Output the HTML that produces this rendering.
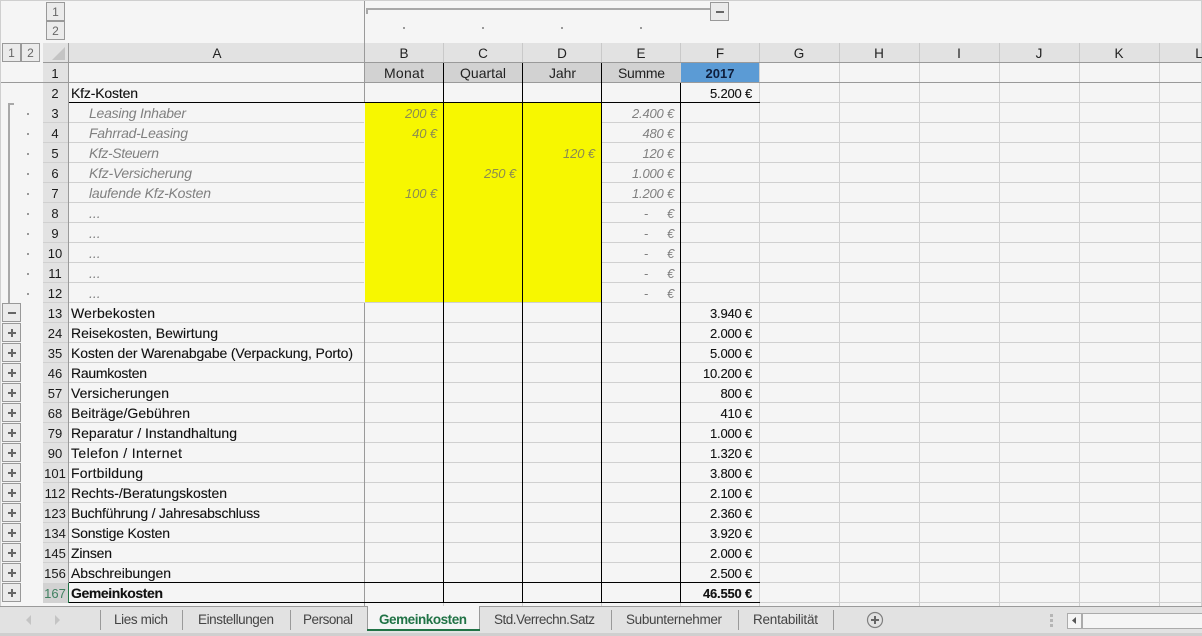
<!DOCTYPE html>
<html lang="de"><head><meta charset="utf-8"><title>Gemeinkosten</title>
<style>
html,body{margin:0;padding:0;width:1202px;height:636px;overflow:hidden;background:#f5f5f5}
svg{display:block;font-family:"Liberation Sans",sans-serif;font-size:14px}
.l{shape-rendering:crispEdges;fill:none}
.i{font-style:italic;fill:#808080}
.v{font-size:13px;letter-spacing:-.2px}
.y{font-style:italic;fill:#8c8c50;font-size:13px;letter-spacing:-.1px}
.n{text-anchor:middle;fill:#1a1a1a;font-size:13px}
.c{text-anchor:middle;fill:#222;font-size:13.5px}
.h{text-anchor:middle;fill:#222;font-size:14px}
.e{text-anchor:end;fill:#111;font-size:13px;letter-spacing:-.2px;stroke:#111;stroke-width:.12px}
.t{fill:#444;font-size:13.5px}
.d{fill:#111;stroke:#111;stroke-width:.12px}
.b{fill:#ebebeb;stroke:#999;shape-rendering:crispEdges}
.g{fill:#666;font-size:12px;text-anchor:middle}
</style></head><body>
<svg width="1202" height="636" viewBox="0 0 1202 636" xmlns="http://www.w3.org/2000/svg">
<rect width="1202" height="636" fill="#f5f5f5"/>
<!-- header backgrounds -->
<rect x="43" y="43" width="1159" height="20" fill="#e2e2e2"/>
<rect x="43" y="63" width="25" height="540" fill="#e2e2e2"/>
<rect x="43" y="583" width="25" height="20" fill="#d2d2d2"/>
<rect x="365" y="63" width="316" height="19" fill="#d2d2d2"/>
<rect x="681" y="63" width="79" height="19" fill="#5b9bd5"/>
<rect x="365" y="103" width="237" height="200" fill="#f7f700"/>
<!-- light grid -->
<path class="l" stroke="#d0d0d0" d="M43 122.500H364M602 122.500H1202M43 142.500H364M602 142.500H1202M43 162.500H364M602 162.500H1202M43 182.500H364M602 182.500H1202M43 202.500H364M602 202.500H1202M43 222.500H364M602 222.500H1202M43 242.500H364M602 242.500H1202M43 262.500H364M602 262.500H1202M43 282.500H364M602 282.500H1202M43 302.500H1202M43 322.500H1202M43 342.500H1202M43 362.500H1202M43 382.500H1202M43 402.500H1202M43 422.500H1202M43 442.500H1202M43 462.500H1202M43 482.500H1202M43 502.500H1202M43 522.500H1202M43 542.500H1202M43 562.500H1202M760 102.500H1202M760 582.500H1202M760 602.500H1202"/>
<path class="l" stroke="#d0d0d0" d="M759.500 63V606M839.500 63V606M919.500 63V606M999.500 63V606M1079.500 63V606M1159.500 63V606M443.500 602V606M522.500 602V606M601.500 602V606M680.500 602V606"/>
<path class="l" stroke="#c9c9c9" d="M443.500 43V62M522.500 43V62M601.500 43V62M680.500 43V62M759.500 43V62M839.500 43V62M919.500 43V62M999.500 43V62M1079.500 43V62M1159.500 43V62"/>
<!-- grey lines -->
<path class="l" stroke="#9a9a9a" d="M43 62.500H1202M0 82.500H1202M68.500 43V583M364.500 0V103M364.500 303V606"/>
<path class="l" stroke="#cfcfcf" d="M0 .5H1202M.5 0V606M1201.500 0V606"/>
<!-- black borders -->
<path class="l" stroke="#000" d="M69 102.500H760M69 582.500H760M69 602.500H760M443.500 63V603M522.500 63V603M601.500 63V603M680.500 83V603"/>
<path class="l" stroke="#217346" stroke-width="1" d="M68.500 583V603"/>
<!-- outline -->
<path class="l" stroke="#a8a8a8" stroke-width="2" d="M367 9H711M367 8V14M9 104V304M8 104H14"/>
<rect class="b" x="46.500" y="2.500" width="18" height="18"/><rect class="b" x="46.500" y="21.500" width="18" height="18"/>
<rect class="b" x="2.500" y="43.500" width="18" height="18"/><rect class="b" x="21.500" y="43.500" width="18" height="18"/>
<text class="g" x="55.500" y="16">1</text><text class="g" x="55.500" y="35">2</text>
<text class="g" x="11.500" y="57">1</text><text class="g" x="30.500" y="57">2</text>
<rect class="b" x="710.500" y="2.500" width="18" height="18"/>
<path fill="#666" d="M716 11h8v2h-8z"/>
<path fill="#c4c4c4" d="M65 47V60H52z"/>
<path fill="#999" d="M403 27h2v2h-2zM482 27h2v2h-2zM561 27h2v2h-2zM640 27h2v2h-2zM27 113h2v2h-2zM27 133h2v2h-2zM27 153h2v2h-2zM27 173h2v2h-2zM27 193h2v2h-2zM27 213h2v2h-2zM27 233h2v2h-2zM27 253h2v2h-2zM27 273h2v2h-2zM27 293h2v2h-2z"/>
<!-- +/- buttons -->
<g class="b">
<rect x="2.500" y="303.500" width="18" height="18"/><rect x="2.500" y="323.500" width="18" height="18"/><rect x="2.500" y="343.500" width="18" height="18"/><rect x="2.500" y="363.500" width="18" height="18"/><rect x="2.500" y="383.500" width="18" height="18"/><rect x="2.500" y="403.500" width="18" height="18"/><rect x="2.500" y="423.500" width="18" height="18"/><rect x="2.500" y="443.500" width="18" height="18"/><rect x="2.500" y="463.500" width="18" height="18"/><rect x="2.500" y="483.500" width="18" height="18"/><rect x="2.500" y="503.500" width="18" height="18"/><rect x="2.500" y="523.500" width="18" height="18"/><rect x="2.500" y="543.500" width="18" height="18"/><rect x="2.500" y="563.500" width="18" height="18"/><rect x="2.500" y="583.500" width="18" height="18"/>
</g>
<path fill="#666" d="M8 312h8v2H8zM8 332h8v2H8zM11 329h2v8h-2zM8 352h8v2H8zM11 349h2v8h-2zM8 372h8v2H8zM11 369h2v8h-2zM8 392h8v2H8zM11 389h2v8h-2zM8 412h8v2H8zM11 409h2v8h-2zM8 432h8v2H8zM11 429h2v8h-2zM8 452h8v2H8zM11 449h2v8h-2zM8 472h8v2H8zM11 469h2v8h-2zM8 492h8v2H8zM11 489h2v8h-2zM8 512h8v2H8zM11 509h2v8h-2zM8 532h8v2H8zM11 529h2v8h-2zM8 552h8v2H8zM11 549h2v8h-2zM8 572h8v2H8zM11 569h2v8h-2zM8 592h8v2H8zM11 589h2v8h-2z"/>
<!-- column letters -->
<g class="c">
<text x="217" y="58">A</text><text x="404" y="58">B</text><text x="483" y="58">C</text><text x="562" y="58">D</text><text x="641" y="58">E</text><text x="720" y="58">F</text><text x="799" y="58">G</text><text x="879" y="58">H</text><text x="959" y="58">I</text><text x="1039" y="58">J</text><text x="1119" y="58">K</text><text x="1199" y="58">L</text>
</g>
<!-- row numbers -->
<g class="n">
<text x="55" y="78">1</text><text x="55" y="98">2</text><text x="55" y="118">3</text><text x="55" y="138">4</text><text x="55" y="158">5</text><text x="55" y="178">6</text><text x="55" y="198">7</text><text x="55" y="218">8</text><text x="55" y="238">9</text>
<text x="55" y="258">10</text><text x="55" y="278">11</text><text x="55" y="298">12</text><text x="55" y="318">13</text><text x="55" y="338">24</text><text x="55" y="358">35</text><text x="55" y="378">46</text><text x="55" y="398">57</text><text x="55" y="418">68</text><text x="55" y="438">79</text><text x="55" y="458">90</text>
<text x="55" y="478">101</text><text x="55" y="498">112</text><text x="55" y="518">123</text><text x="55" y="538">134</text><text x="55" y="558">145</text><text x="55" y="578">156</text>
<text x="55" y="598" style="fill:#3f8060">167</text>
</g>
<!-- header row -->
<g class="h">
<text x="404" y="78" textLength="40">Monat</text><text x="483" y="78" textLength="46">Quartal</text><text x="562.500" y="78" textLength="27">Jahr</text><text x="641.500" y="78" textLength="47">Summe</text>
<text x="720" y="78" style="font-weight:bold;font-size:13px;fill:#0f1f3d">2017</text>
</g>
<!-- column A -->
<g class="d">
<text x="71" y="98" textLength="67">Kfz-Kosten</text>
<text x="71" y="318" textLength="84">Werbekosten</text>
<text x="71" y="338" textLength="147">Reisekosten, Bewirtung</text>
<text x="71" y="358" textLength="282">Kosten der Warenabgabe (Verpackung, Porto)</text>
<text x="71" y="378" textLength="76">Raumkosten</text>
<text x="71" y="398" textLength="98">Versicherungen</text>
<text x="71" y="418" textLength="119">Beiträge/Gebühren</text>
<text x="71" y="438" textLength="166">Reparatur / Instandhaltung</text>
<text x="71" y="458" textLength="111">Telefon / Internet</text>
<text x="71" y="478" textLength="72">Fortbildung</text>
<text x="71" y="498" textLength="156">Rechts-/Beratungskosten</text>
<text x="71" y="518" textLength="189">Buchführung / Jahresabschluss</text>
<text x="71" y="538" textLength="99">Sonstige Kosten</text>
<text x="71" y="558" textLength="41">Zinsen</text>
<text x="71" y="578" textLength="100">Abschreibungen</text>
<text x="71" y="598" textLength="92" font-weight="bold">Gemeinkosten</text>
</g>
<g class="i">
<text x="89" y="118" textLength="97">Leasing Inhaber</text>
<text x="89" y="138" textLength="99">Fahrrad-Leasing</text>
<text x="89" y="158" textLength="70">Kfz-Steuern</text>
<text x="89" y="178" textLength="103">Kfz-Versicherung</text>
<text x="89" y="198" textLength="122">laufende Kfz-Kosten</text>
<text x="89" y="218">...</text><text x="89" y="238">...</text><text x="89" y="258">...</text><text x="89" y="278">...</text><text x="89" y="298">...</text>
</g>
<!-- yellow values -->
<g class="y" text-anchor="end">
<text x="437" y="118">200 €</text><text x="437" y="138">40 €</text><text x="516" y="178">250 €</text><text x="595" y="158">120 €</text><text x="437" y="198">100 €</text>
</g>
<!-- E values -->
<g class="i v" text-anchor="end">
<text x="674" y="118">2.400 €</text><text x="674" y="138">480 €</text><text x="674" y="158">120 €</text><text x="674" y="178">1.000 €</text><text x="674" y="198">1.200 €</text>
<text x="648" y="218">-</text><text x="674" y="218">€</text><text x="648" y="238">-</text><text x="674" y="238">€</text><text x="648" y="258">-</text><text x="674" y="258">€</text><text x="648" y="278">-</text><text x="674" y="278">€</text><text x="648" y="298">-</text><text x="674" y="298">€</text>
</g>
<!-- F values -->
<g class="e">
<text x="752" y="98">5.200 €</text>
<text x="752" y="318">3.940 €</text><text x="752" y="338">2.000 €</text><text x="752" y="358">5.000 €</text><text x="752" y="378">10.200 €</text><text x="752" y="398">800 €</text><text x="752" y="418">410 €</text><text x="752" y="438">1.000 €</text><text x="752" y="458">1.320 €</text><text x="752" y="478">3.800 €</text><text x="752" y="498">2.100 €</text><text x="752" y="518">2.360 €</text><text x="752" y="538">3.920 €</text><text x="752" y="558">2.000 €</text><text x="752" y="578">2.500 €</text>
<text x="752" y="598" font-weight="bold">46.550 €</text>
</g>
<!-- tab strip -->
<rect x="0" y="607" width="1202" height="26" fill="#e2e2e2"/>
<rect x="0" y="633" width="1202" height="3" fill="#cfcfcf"/>
<path class="l" stroke="#9a9a9a" d="M0 606.500H367M480 606.500H1202"/>
<rect x="367" y="606" width="113" height="25" fill="#f5f5f5"/>
<path class="l" stroke="#9a9a9a" d="M367.500 606V629M479.500 606V629"/>
<rect x="367" y="629" width="113" height="2" fill="#217346"/>
<path class="l" stroke="#9a9a9a" d="M100.500 610V630M182.500 610V630M290.500 610V630M611.500 610V630M738.500 610V630M833.500 610V630"/>
<path fill="#c4c4c4" d="M31 615v10l-5-5zM55 615v10l5-5z"/>
<g class="t">
<text x="114" y="624" textLength="54">Lies mich</text>
<text x="198" y="624" textLength="76">Einstellungen</text>
<text x="303" y="624" textLength="50">Personal</text>
<text x="379" y="624" textLength="88" style="font-weight:bold;fill:#217346">Gemeinkosten</text>
<text x="494" y="624" textLength="101">Std.Verrechn.Satz</text>
<text x="626" y="624" textLength="96">Subunternehmer</text>
<text x="753" y="624" textLength="65">Rentabilität</text>
</g>
<circle cx="875" cy="620" r="7.500" fill="none" stroke="#808080" stroke-width="1.200"/>
<path fill="#666" d="M871 619h8v2h-8zM874 616h2v8h-2z"/>
<path fill="#b5b5b5" d="M1050 614h3v3h-3zM1050 619h3v3h-3zM1050 624h3v3h-3z"/>
<rect x="1067.500" y="613.500" width="135" height="15" fill="#f5f5f5" stroke="#ababab" shape-rendering="crispEdges"/>
<path class="l" stroke="#ababab" stroke-width="2" d="M1082 613V629"/>
<path fill="#555" d="M1076 617v7l-4-3.500z"/>
</svg>
</body></html>
